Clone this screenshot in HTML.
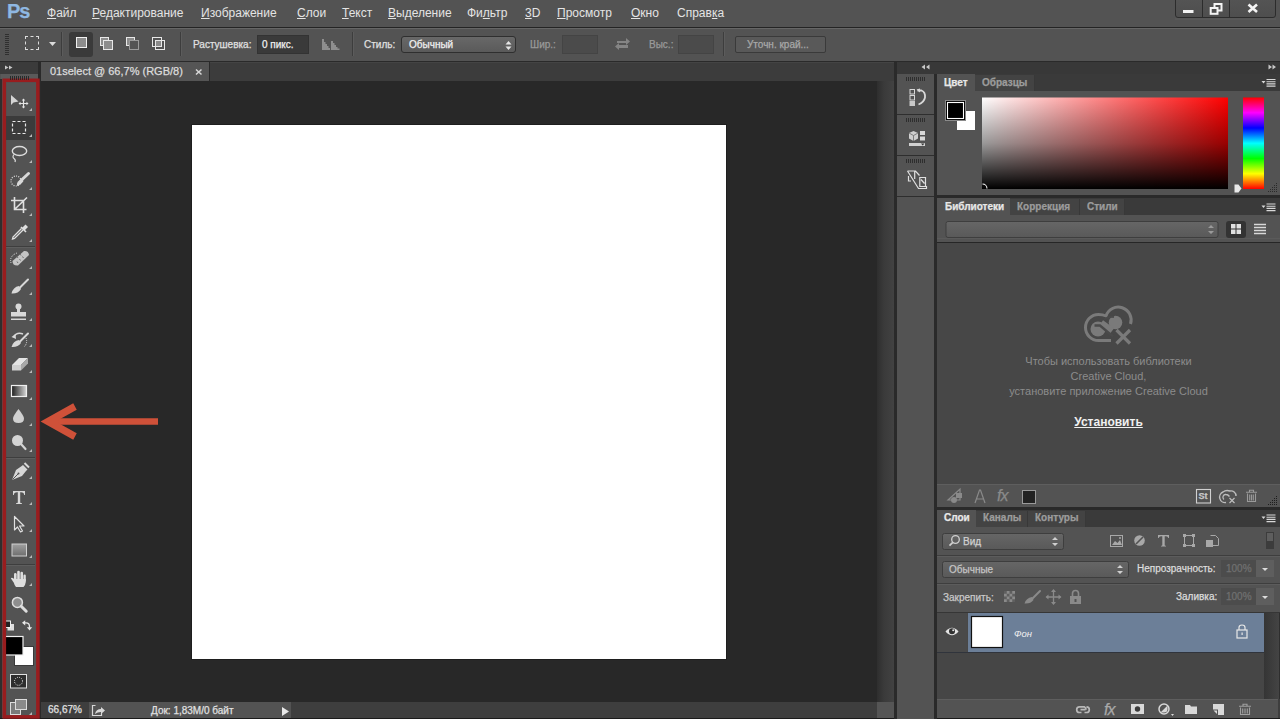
<!DOCTYPE html>
<html><head><meta charset="utf-8">
<style>
#menu .t{-webkit-text-stroke:0}
#lib .t{-webkit-text-stroke:0}
*{margin:0;padding:0;box-sizing:border-box}
html,body{width:1280px;height:719px;overflow:hidden;background:#535353;font-family:"Liberation Sans",sans-serif;}
.a{position:absolute}
.t{position:absolute;white-space:nowrap;line-height:1;-webkit-text-stroke:0.25px currentColor}
</style></head><body>
<!-- menu bar -->
<div class="a" style="left:0;top:0;width:1280px;height:27px;background:#535353"></div>
<div class="a" style="left:0;top:27px;width:1280px;height:1px;background:#242424"></div>
<!-- options bar -->
<div class="a" style="left:0;top:28px;width:1280px;height:34px;background:#535353"></div>
<div class="a" style="left:0;top:28px;width:1280px;height:1px;background:#666666"></div>
<div class="a" style="left:0;top:61px;width:1280px;height:1px;background:#2a2a2a"></div>
<!-- left toolbar -->
<div class="a" style="left:0;top:62px;width:38px;height:12px;background:#3b3b3b"></div>
<div class="a" style="left:0;top:74px;width:38px;height:645px;background:#535353"></div>
<div class="a" style="left:38px;top:61px;width:3px;height:658px;background:#2a2a2a"></div>
<div class="a" style="left:0;top:79px;width:1.5px;height:640px;background:#2e2e2e"></div>
<!-- tab row -->
<div class="a" style="left:41px;top:62px;width:853px;height:19px;background:#3c3c3c"></div>
<div class="a" style="left:41px;top:62px;width:853px;height:1px;background:#444"></div>
<div class="a" style="left:41px;top:62px;width:168px;height:19px;background:#555555"></div>
<div class="a" style="left:209px;top:62px;width:1px;height:19px;background:#2a2a2a"></div>
<!-- canvas area -->
<div class="a" style="left:41px;top:81px;width:836px;height:621px;background:#282828"></div>
<div class="a" style="left:877px;top:81px;width:17px;height:621px;background:linear-gradient(to right,#2e2e2e,#3a3a3a 40%,#424242)"></div>
<div class="a" style="left:191px;top:124px;width:536px;height:536px;background:#1e1e1e"></div>
<div class="a" style="left:192px;top:125px;width:534px;height:534px;background:#ffffff"></div>
<!-- status bar -->
<div class="a" style="left:41px;top:702px;width:853px;height:16px;background:#3e3e3e"></div>
<div class="a" style="left:877px;top:702px;width:17px;height:16px;background:#555555"></div>
<div class="a" style="left:89px;top:702px;width:202px;height:16px;background:#535353"></div>
<div class="a" style="left:0;top:718px;width:1280px;height:1px;background:#1a1a1a"></div>
<!-- right dock -->
<div class="a" style="left:894px;top:61px;width:3px;height:658px;background:#2a2a2a"></div>
<div class="a" style="left:897px;top:62px;width:383px;height:12px;background:#383838"></div>
<div class="a" style="left:897px;top:74px;width:37px;height:645px;background:#535353"></div>
<div class="a" style="left:934px;top:74px;width:3px;height:645px;background:#2a2a2a"></div>
<!-- color panel -->
<div class="a" style="left:937px;top:74px;width:343px;height:17px;background:#3a3a3a"></div>
<div class="a" style="left:937px;top:91px;width:343px;height:104px;background:#535353"></div>
<div class="a" style="left:937px;top:195px;width:343px;height:3px;background:#2a2a2a"></div>
<!-- library panel -->
<div class="a" style="left:937px;top:198px;width:343px;height:17px;background:#3a3a3a"></div>
<div class="a" style="left:937px;top:215px;width:343px;height:27px;background:#535353"></div>
<div class="a" style="left:937px;top:242px;width:343px;height:1px;background:#262626"></div>
<div class="a" style="left:937px;top:238px;width:343px;height:1px;background:#5a5a5a"></div>
<div class="a" style="left:937px;top:243px;width:343px;height:241px;background:#474747"></div>
<div class="a" style="left:937px;top:484px;width:343px;height:23px;background:#535353"></div>
<div class="a" style="left:937px;top:507px;width:343px;height:3px;background:#2a2a2a"></div>
<!-- layers panel -->
<div class="a" style="left:937px;top:510px;width:343px;height:17px;background:#3a3a3a"></div>
<div class="a" style="left:937px;top:527px;width:343px;height:86px;background:#535353"></div>
<div class="a" style="left:937px;top:613px;width:343px;height:86px;background:#464646"></div>
<div class="a" style="left:937px;top:699px;width:343px;height:19px;background:#535353"></div>
<div class="a" style="left:967.5px;top:613px;width:296.5px;height:39px;background:#6c7f98"></div>

<!-- MENU CONTENT -->
<div class="t" style="left:7px;top:1px;font-size:20px;font-weight:bold;color:#8fb8e2;letter-spacing:-1px">Ps</div>
<div id="menu" style="position:absolute;left:0;top:0;font-size:12px;color:#e4e4e4;--ts:0">
<span class="t" style="left:47px;top:7px"><u>Ф</u>айл</span>
<span class="t" style="left:92px;top:7px"><u>Р</u>едактирование</span>
<span class="t" style="left:201px;top:7px"><u>И</u>зображение</span>
<span class="t" style="left:297px;top:7px"><u>С</u>лои</span>
<span class="t" style="left:342px;top:7px"><u>Т</u>екст</span>
<span class="t" style="left:388px;top:7px"><u>В</u>ыделение</span>
<span class="t" style="left:467px;top:7px">Фи<u>л</u>ьтр</span>
<span class="t" style="left:525px;top:7px"><u>3</u>D</span>
<span class="t" style="left:557px;top:7px"><u>П</u>росмотр</span>
<span class="t" style="left:631px;top:7px"><u>О</u>кно</span>
<span class="t" style="left:677px;top:7px">Справ<u>к</u>а</span>
</div>

<!-- OPTIONS CONTENT -->
<div id="opt" style="position:absolute;left:0;top:0;font-size:10px">
<!-- grip -->
<div class="a" style="left:5px;top:34px;width:4px;height:21px;background:repeating-linear-gradient(#2f2f2f 0 1px,transparent 1px 2px)"></div>
<!-- marquee icon -->
<div class="a" style="left:25px;top:36px;width:14px;height:14px;border:1px dashed #dcdcdc"></div>
<svg class="a" style="left:49px;top:42px" width="8" height="5"><path d="M0 0H7L3.5 4Z" fill="#dcdcdc"/></svg>
<div class="a" style="left:61px;top:32px;width:1px;height:24px;background:#3d3d3d"></div>
<div class="a" style="left:62px;top:32px;width:1px;height:24px;background:#5c5c5c"></div>
<!-- selection mode buttons -->
<div class="a" style="left:69px;top:32px;width:24px;height:25px;background:#3a3a3a;border-radius:3px"></div>
<div class="a" style="left:76px;top:37px;width:11px;height:11px;border:1px solid #f0f0f0;background:#8c8c8c"></div>
<div class="a" style="left:100px;top:37px;width:9px;height:9px;border:1px solid #e8e8e8;background:#8c8c8c"></div>
<div class="a" style="left:103px;top:40px;width:10px;height:10px;border:1px solid #e8e8e8;background:#8c8c8c"></div>
<div class="a" style="left:126px;top:37px;width:9px;height:9px;border:1px solid #e8e8e8;background:#8c8c8c"></div>
<div class="a" style="left:129px;top:40px;width:10px;height:10px;border:1px solid #9a9a9a;background:#535353"></div>
<div class="a" style="left:152px;top:37px;width:10px;height:10px;border:1px solid #e8e8e8;background:transparent"></div>
<div class="a" style="left:155px;top:40px;width:10px;height:10px;border:1px solid #e8e8e8;background:transparent"></div>
<div class="a" style="left:156px;top:41px;width:5px;height:5px;background:#8c8c8c"></div>
<div class="a" style="left:180px;top:32px;width:1px;height:24px;background:#3d3d3d"></div>
<div class="a" style="left:181px;top:32px;width:1px;height:24px;background:#5c5c5c"></div>
<span class="t" id="rast" style="left:193px;top:40px;color:#e0e0e0">Растушевка:</span>
<div class="a" style="left:257px;top:35px;width:52px;height:19px;background:#3a3a3a;border:1px solid #333"></div>
<span class="t" style="left:262px;top:40px;color:#f0f0f0">0 пикс.</span>
<svg class="a" style="left:321px;top:38px" width="20" height="13"><path d="M1 1H3V4H4.5V6H6V8H7.5V10H9V12H1Z" fill="#8e8e8e"/><path d="M10 3H12V5H13.5V7H15V9H16.5V10.5H18.5V12H10Z" fill="#8e8e8e"/></svg>
<div class="a" style="left:352px;top:32px;width:1px;height:24px;background:#3d3d3d"></div>
<div class="a" style="left:353px;top:32px;width:1px;height:24px;background:#5c5c5c"></div>
<span class="t" style="left:364px;top:40px;color:#e0e0e0">Стиль:</span>
<div class="a" style="left:401px;top:36px;width:115px;height:17px;border-radius:3px;background:linear-gradient(#686868,#5a5a5a);border:1px solid #2f2f2f"></div>
<span class="t" style="left:409px;top:40px;color:#f0f0f0">Обычный</span>
<svg class="a" style="left:505px;top:40px" width="8" height="11"><path d="M0.5 4.5L3.5 1L6.5 4.5ZM0.5 6.5L3.5 10L6.5 6.5Z" fill="#e6e6e6"/></svg>
<span class="t" style="left:530px;top:40px;color:#9a9a9a">Шир.:</span>
<div class="a" style="left:562px;top:35px;width:36px;height:19px;background:#4b4b4b;border:1px solid #444"></div>
<svg class="a" style="left:614px;top:36px" width="17" height="15"><path d="M3 5H12V2L16 5.5L12 9V7H3Z" fill="#858585"/><path d="M14 9H5V7L1 10.5L5 14V12H14Z" fill="#858585"/></svg>
<span class="t" style="left:649px;top:40px;color:#9a9a9a">Выс.:</span>
<div class="a" style="left:678px;top:35px;width:36px;height:19px;background:#4b4b4b;border:1px solid #444"></div>
<div class="a" style="left:723px;top:32px;width:1px;height:24px;background:#3d3d3d"></div>
<div class="a" style="left:724px;top:32px;width:1px;height:24px;background:#5c5c5c"></div>
<div class="a" style="left:735px;top:36px;width:91px;height:17px;border-radius:2px;background:#595959;border:1px solid #3a3a3a"></div>
<span class="t" style="left:747px;top:40px;color:#a8a8a8">Уточн. край...</span>
</div>

<!-- TOOLBAR -->
<svg class="a" style="left:0;top:0" width="41" height="719" viewBox="0 0 41 719">
<defs>
<linearGradient id="gGrad" x1="0" x2="1" y1="0" y2="0"><stop offset="0" stop-color="#1a1a1a"/><stop offset="1" stop-color="#d8d8d8"/></linearGradient>
<linearGradient id="gRect" x1="0" x2="0" y1="0" y2="1"><stop offset="0" stop-color="#a0a0a0"/><stop offset="1" stop-color="#6e6e6e"/></linearGradient>
</defs>
<!-- header arrows -->
<path d="M5 65.5L8.5 67.5L5 69.5Z M9 65.5L12.5 67.5L9 69.5Z" fill="#c8c8c8"/>
<!-- top grip -->
<rect x="1" y="74" width="37" height="5" fill="#5a5a5a"/>
<path d="M10.5 76V80M12.5 76V80M14.5 76V80M16.5 76V80M18.5 76V80M20.5 76V80M22.5 76V80M24.5 76V80M26.5 76V80M28.5 76V80" stroke="#2a2a2a" stroke-width="1"/>
<!-- selected marquee bg -->
<rect x="6" y="116" width="29" height="24" fill="#3b3b3b"/>
<!-- separators -->
<rect x="6" y="246" width="29" height="1" fill="#3e3e3e"/><rect x="6" y="247" width="29" height="1" fill="#5e5e5e"/>
<rect x="6" y="457" width="29" height="1" fill="#3e3e3e"/><rect x="6" y="458" width="29" height="1" fill="#5e5e5e"/>
<rect x="6" y="564" width="29" height="1" fill="#3e3e3e"/><rect x="6" y="565" width="29" height="1" fill="#5e5e5e"/>
<g fill="#c4c4c4">
<!-- corner triangles -->
<path d="M32 108V111H29Z M32 134V137H29Z M32 160V163H29Z M32 187V190H29Z M32 213V216H29Z M32 239V242H29Z M32 266V269H29Z M32 292V295H29Z M32 318V321H29Z M32 344V347H29Z M32 370V373H29Z M32 397V400H29Z M32 423V426H29Z M32 449V452H29Z M32 476V479H29Z M32 502V505H29Z M32 529V532H29Z M32 555V558H29Z M32 583V586H29Z" fill="#b8b8b8"/>
</g>
<!-- move tool -->
<path d="M11 95V105L13.5 102.5L18.5 101.5Z" fill="#d4d4d4"/>
<path d="M23.5 99V108M19 103.5H28" stroke="#e4e4e4" stroke-width="1.2" fill="none"/>
<path d="M23.5 98.5L21.8 100.5H25.2Z M23.5 108.5L21.8 106.5H25.2Z M18.5 103.5L20.5 101.8V105.2Z M28.5 103.5L26.5 101.8V105.2Z" fill="#e4e4e4"/>
<!-- marquee -->
<rect x="12.5" y="121.5" width="13" height="12" fill="none" stroke="#e8e8e8" stroke-width="1.2" stroke-dasharray="3 2"/>
<!-- lasso -->
<ellipse cx="19.5" cy="151" rx="7.2" ry="4.5" fill="none" stroke="#dcdcdc" stroke-width="1.4"/>
<path d="M14 154.5Q12 157 14 158.5Q16 160 15 162" fill="none" stroke="#dcdcdc" stroke-width="1.2"/>
<!-- quick select -->
<circle cx="16" cy="181" r="5" fill="none" stroke="#e0e0e0" stroke-width="1.2" stroke-dasharray="1 1.3"/>
<path d="M28.5 173.5L21 180.5" stroke="#d8d8d8" stroke-width="3" stroke-linecap="round"/>
<path d="M22 179Q16 181 17 186Q21 185 23.5 181Z" fill="#d8d8d8"/>
<!-- crop -->
<path d="M14.5 197V209.5H26.5 M11 200.5H23.5V213 M15 209L27 197.5" fill="none" stroke="#e0e0e0" stroke-width="1.6"/>
<!-- eyedropper -->
<path d="M25.5 224.5L28 227L24.5 230.5L22 228Z" fill="#e0e0e0"/>
<path d="M21 227L26 232" stroke="#e0e0e0" stroke-width="1.6"/>
<path d="M23 230L14.5 238.5L12.5 239L13 237L21.5 228.5" fill="none" stroke="#e0e0e0" stroke-width="1.3"/>
<!-- healing -->
<path d="M12.5 261L24 251Q28.5 250.5 29 255L18 265.5Q12.5 266 12.5 261Z" fill="#c4c4c4"/>
<path d="M17 256.5L18 258M20 254L21 255.5M19.5 259L20.5 260.5M22.5 256.5L23.5 258M17 261.5L18 263" stroke="#6c6c6c" stroke-width="1"/>
<path d="M11 263Q9 256 17 253" fill="none" stroke="#e0e0e0" stroke-width="1" stroke-dasharray="1 1"/>
<!-- brush -->
<path d="M28 279.5L19.5 288" stroke="#d8d8d8" stroke-width="2" stroke-linecap="round"/>
<path d="M19 286Q13 287 11.5 293.5Q18 294 21 289Z" fill="#d8d8d8"/>
<!-- stamp -->
<circle cx="18.5" cy="306.5" r="3" fill="#d8d8d8"/>
<path d="M17 308H20V312H17Z" fill="#d8d8d8"/>
<path d="M11 312H26V316.5H11Z" fill="#d8d8d8"/>
<path d="M11 318.5H26V320H11Z" fill="#d8d8d8"/>
<!-- history brush -->
<path d="M13.5 337Q17 331.5 23 334" fill="none" stroke="#d8d8d8" stroke-width="1.4"/>
<path d="M11.5 337L15.5 334L16 339Z" fill="#d8d8d8"/>
<path d="M28 333.5L19.5 342" stroke="#d8d8d8" stroke-width="2" stroke-linecap="round"/>
<path d="M19 340Q13 341 11.5 347Q18 347.5 21 343Z" fill="#d8d8d8"/>
<path d="M26 338Q28 343 24 347" fill="none" stroke="#e0e0e0" stroke-width="1" stroke-dasharray="1 1"/>
<!-- eraser -->
<path d="M12 365L19 358H28L21 365Z" fill="#e4e4e4"/>
<path d="M12 365V370.5H21V365Z" fill="#cfcfcf"/>
<path d="M21 365V370.5L28 363.5V358Z" fill="#a8a8a8"/>
<!-- gradient -->
<rect x="11.5" y="385.5" width="15" height="11" fill="url(#gGrad)" stroke="#f0f0f0" stroke-width="1.2"/>
<!-- blur drop -->
<path d="M18.5 409Q13 416 13 418.5Q13 423 18.5 423Q24 423 24 418.5Q24 416 18.5 409Z" fill="#d0d0d0"/>
<!-- dodge -->
<circle cx="17.5" cy="440.5" r="5.5" fill="#d4d4d4"/>
<path d="M21 444L25.5 449" stroke="#d4d4d4" stroke-width="2.2" stroke-linecap="round"/>
<!-- pen -->
<path d="M23 465L27.5 469.5L26 471L22 476L12 480L16 470L21 466.5Z" fill="#d8d8d8"/>
<path d="M24.5 463L29 467.5" stroke="#d8d8d8" stroke-width="2"/>
<path d="M12.5 479.5L18 474" stroke="#555" stroke-width="1"/>
<circle cx="18.5" cy="473.5" r="1" fill="#555"/>
<!-- type -->
<path d="M13 491H25V495H24.2Q24 492.3 21 492.3H20.2V502.5Q20.2 503.3 22 503.3V504H16V503.3Q17.8 503.3 17.8 502.5V492.3H17Q14 492.3 13.8 495H13Z" fill="#d8d8d8"/>
<!-- path select -->
<path d="M14.5 516.5V530L17.5 527L20.5 532L22.5 531L19.5 526H24Z" fill="none" stroke="#e0e0e0" stroke-width="1.2" stroke-linejoin="round"/>
<!-- rectangle -->
<rect x="12" y="544" width="14.5" height="12" fill="url(#gRect)" stroke="#d0d0d0" stroke-width="1"/>
<!-- hand -->
<g fill="#dedede">
<rect x="14" y="573" width="2.6" height="8" rx="1.3"/>
<rect x="17.2" y="570.8" width="2.6" height="10" rx="1.3"/>
<rect x="20.4" y="571.8" width="2.6" height="9" rx="1.3"/>
<rect x="23.4" y="574.5" width="2.4" height="7" rx="1.2"/>
<path d="M14 579H25.8V582Q25.5 585 23.5 587H16Q14 584.5 14 582Z"/>
<path d="M10.8 578.2Q12 577 13.5 578.5L16.5 582.5L15 584.5Z"/>
</g>
<!-- zoom -->
<circle cx="17.4" cy="602.4" r="5" fill="#8e8e8e" stroke="#dedede" stroke-width="1.5"/>
<path d="M21.2 606.2L26.2 611.2" stroke="#dedede" stroke-width="3" stroke-linecap="round"/>
<!-- default colors -->
<rect x="7.5" y="624" width="6.5" height="6.5" fill="#e0e0e0"/>
<rect x="5.5" y="621" width="5" height="6.5" fill="#222" stroke="#f0f0f0" stroke-width="1"/>
<!-- swap -->
<path d="M24 622.8H26Q29.5 622.8 29.5 626.5V628" fill="none" stroke="#e8e8e8" stroke-width="1.3"/>
<path d="M22 622.8L25.2 620.2V625.4Z M29.5 630.5L26.8 627.3H32.2Z" fill="#e8e8e8"/>
<!-- bg / fg -->
<rect x="14.5" y="646.5" width="19" height="19" fill="#ffffff" stroke="#3a3a3a" stroke-width="1"/>
<rect x="4.5" y="636.5" width="18.5" height="18.5" fill="#000000" stroke="#f0f0f0" stroke-width="1.2"/>
<!-- quick mask -->
<rect x="10.5" y="674.5" width="16" height="13.5" fill="#2e2e2e" stroke="#e0e0e0" stroke-width="1"/>
<circle cx="18.5" cy="681.3" r="4" fill="none" stroke="#e8e8e8" stroke-width="1" stroke-dasharray="1 1.1"/>
<!-- screen mode -->
<rect x="10.5" y="702.5" width="10" height="12" fill="#7a7a7a" stroke="#dcdcdc" stroke-width="1"/>
<rect x="15.5" y="699.5" width="11" height="10" fill="#8a8a8a" stroke="#dcdcdc" stroke-width="1"/>
<path d="M32 712V715H29Z" fill="#b8b8b8"/>
<!-- red border -->
<rect x="4.3" y="80.3" width="33.6" height="636.6" fill="none" stroke="#981c1e" stroke-width="3.6"/>
<path d="M10.5 76V80M12.5 76V80M14.5 76V80M16.5 76V80M18.5 76V80M20.5 76V80M22.5 76V80M24.5 76V80M26.5 76V80M28.5 76V80" stroke="#2a2a2a" stroke-width="1"/>
</svg>
<!-- RED ARROW -->
<svg class="a" style="left:38px;top:400px" width="124" height="44" viewBox="38 400 124 44">
<path d="M158 421.5H52" fill="none" stroke="#cf5139" stroke-width="6.6"/>
<path d="M75 406.5L48 421.5L75 436.5" fill="none" stroke="#cf5139" stroke-width="7.2" stroke-linecap="butt" stroke-linejoin="miter" stroke-miterlimit="10"/>
</svg>

<!-- TAB + STATUS -->
<div id="tab" style="position:absolute;left:0;top:0;font-size:11px">
<span class="t" style="left:50px;top:66px;color:#dcdcdc">01select @ 66,7% (RGB/8)</span>
<svg class="a" style="left:193px;top:67px" width="10" height="10"><path d="M3 2.5L8.5 7.5M8.5 2.5L3 7.5" stroke="#d8d8d8" stroke-width="1.5"/></svg>
</div>
<div id="stat" style="position:absolute;left:0;top:0;font-size:10px">
<span class="t" style="left:48px;top:705px;color:#e0e0e0">66,67%</span>
<svg class="a" style="left:91px;top:704px" width="16" height="13"><path d="M4.5 1.5H1.5V11.5H10.5V9" fill="none" stroke="#d8d8d8" stroke-width="1.2"/><path d="M4 10Q5 5 10 5V3L14 6.5L10 10V8Q6.5 8 4 10Z" fill="#d8d8d8"/></svg>
<span class="t" style="left:151px;top:706px;color:#e0e0e0">Док: 1,83M/0 байт</span>
<svg class="a" style="left:281px;top:706px" width="9" height="11"><path d="M1 1V10L8 5.5Z" fill="#e8e8e8"/></svg>
</div>

<!-- RIGHT DOCK ICONS -->
<svg class="a" style="left:894px;top:61px" width="386" height="658" viewBox="894 61 386 658">
<defs>
<linearGradient id="gHueW" x1="0" x2="1" y1="0" y2="0"><stop offset="0" stop-color="#ffffff"/><stop offset="1" stop-color="#ff0000"/></linearGradient>
<linearGradient id="gBlk" x1="0" x2="0" y1="0" y2="1"><stop offset="0" stop-color="#000" stop-opacity="0"/><stop offset="0.5" stop-color="#000" stop-opacity="0.4"/><stop offset="1" stop-color="#000" stop-opacity="1"/></linearGradient>
<linearGradient id="gHue" x1="0" x2="0" y1="0" y2="1">
<stop offset="0" stop-color="#ff0000"/><stop offset="0.1667" stop-color="#ff00ff"/><stop offset="0.3333" stop-color="#0000ff"/><stop offset="0.5" stop-color="#00ffff"/><stop offset="0.6667" stop-color="#00ff00"/><stop offset="0.8333" stop-color="#ffff00"/><stop offset="1" stop-color="#ff0000"/></linearGradient>
<linearGradient id="gDrop" x1="0" x2="0" y1="0" y2="1"><stop offset="0" stop-color="#666"/><stop offset="1" stop-color="#595959"/></linearGradient>
</defs>
<!-- header arrows -->
<path d="M925 64.5L921.5 67L925 69.5Z M929.5 64.5L926 67L929.5 69.5Z" fill="#c8c8c8"/>
<path d="M1268.5 64.5L1272 67L1268.5 69.5Z M1272.5 64.5L1276 67L1272.5 69.5Z" fill="#c8c8c8"/>
<!-- icon column separators -->
<rect x="897" y="114" width="37" height="1" fill="#2e2e2e"/>
<rect x="897" y="155" width="37" height="1" fill="#2e2e2e"/>
<rect x="897" y="196" width="37" height="1" fill="#2e2e2e"/>
<path d="M906.5 77V81M908.5 77V81M910.5 77V81M912.5 77V81M914.5 77V81M916.5 77V81M918.5 77V81M920.5 77V81M922.5 77V81M924.5 77V81" stroke="#2e2e2e"/>
<path d="M906.5 118V122M908.5 118V122M910.5 118V122M912.5 118V122M914.5 118V122M916.5 118V122M918.5 118V122M920.5 118V122M922.5 118V122M924.5 118V122" stroke="#2e2e2e"/>
<path d="M906.5 159V163M908.5 159V163M910.5 159V163M912.5 159V163M914.5 159V163M916.5 159V163M918.5 159V163M920.5 159V163M922.5 159V163M924.5 159V163" stroke="#2e2e2e"/>
<!-- history icon -->
<rect x="910" y="89.5" width="4.5" height="4.5" fill="none" stroke="#d8d8d8" stroke-width="1"/>
<rect x="910" y="95.5" width="4.5" height="4.5" fill="none" stroke="#d8d8d8" stroke-width="1"/>
<rect x="909.5" y="101" width="5.5" height="5" fill="#c8c8c8"/>
<path d="M917.5 90.5H921.5Q925.5 92 925 97.5Q924 102.5 918.5 104.5" fill="none" stroke="#d8d8d8" stroke-width="1.8"/>
<path d="M916.5 89.5L920 88.5V92.5Z" fill="#d8d8d8"/>
<!-- 3D icon -->
<path d="M913.5 131L918 133V138.5L913.5 141L909 138.5V133Z" fill="#cfcfcf"/>
<path d="M909 133L913.5 135.5L918 133M913.5 135.5V141" stroke="#6a6a6a" stroke-width="0.8" fill="none"/>
<rect x="920" y="131" width="5" height="4" fill="#d8d8d8"/><rect x="920" y="136.5" width="5" height="4" fill="#d8d8d8"/>
<rect x="909" y="143" width="16" height="3" fill="#d0d0d0"/>
<path d="M921 143.5H924.5L922.7 145.5Z" fill="#333"/>
<!-- measure/clone icon -->
<path d="M907.5 171H915.5L919.5 175.5 M907.5 171L918.5 188.5H926.5V186 M908.5 176V181H911 M914.7 171V179 M919.8 177.5H925.5V186.5H919.8Z M921 179.5L924.5 183.5" fill="none" stroke="#e0e0e0" stroke-width="1.2"/>

<!-- COLOR PANEL -->
<rect x="937" y="74" width="38" height="17" fill="#535353"/>
<rect x="975" y="75" width="59" height="16" fill="#434343"/>
<rect x="1034" y="75" width="1" height="16" fill="#383838"/>
<path d="M1261.5 81H1265.5L1263.5 83.5Z" fill="#d8d8d8"/>
<path d="M1266.5 79.5H1275.5M1266.5 81.7H1275.5M1266.5 83.9H1275.5M1266.5 86.1H1275.5" stroke="#d8d8d8" stroke-width="1.1"/>
<!-- fg/bg -->
<rect x="957" y="111" width="18" height="19" fill="#ffffff"/>
<rect x="945.5" y="100.5" width="20" height="20" fill="#000" stroke="#8a8a8a" stroke-width="1"/>
<rect x="947.5" y="102.5" width="16" height="16" fill="#000" stroke="#ffffff" stroke-width="1.1"/>
<!-- field -->
<rect x="982" y="97.5" width="246" height="91.5" fill="url(#gHueW)"/>
<rect x="982" y="97.5" width="246" height="91.5" fill="url(#gBlk)"/>
<path d="M982.5 184A4.5 4.5 0 0 1 987 188.5" fill="none" stroke="#ffffff" stroke-width="1.1"/>
<rect x="1243" y="97.5" width="21" height="91.5" fill="url(#gHue)"/>
<path d="M1234.5 184.5H1238.5L1241.5 188.5L1238.5 192.5H1234.5Z" fill="#e8e8e8"/>
<path d="M1276 183.5h1M1274 185.5h1M1276 185.5h1M1272 187.5h1M1274 187.5h1M1276 187.5h1M1270 189.5h1M1272 189.5h1M1274 189.5h1M1276 189.5h1M1268 191.5h1M1270 191.5h1M1272 191.5h1M1274 191.5h1M1276 191.5h1" stroke="#2a2a2a" stroke-width="1.2"/>

<!-- LIBRARY PANEL -->
<rect x="937" y="198" width="73" height="17" fill="#535353"/>
<rect x="1010" y="199" width="69" height="16" fill="#434343"/>
<rect x="1079" y="199" width="1" height="16" fill="#383838"/>
<rect x="1080" y="199" width="44" height="16" fill="#434343"/>
<rect x="1124" y="199" width="1" height="16" fill="#383838"/>
<path d="M1261.5 205.5H1265.5L1263.5 208Z" fill="#d8d8d8"/>
<path d="M1266.5 204H1275.5M1266.5 206.2H1275.5M1266.5 208.4H1275.5M1266.5 210.6H1275.5" stroke="#d8d8d8" stroke-width="1.1"/>
<rect x="946" y="221.5" width="272" height="16" rx="2" fill="url(#gDrop)" stroke="#3e3e3e" stroke-width="1"/>
<path d="M1208 228L1211 225L1214 228Z M1208 231L1211 234L1214 231Z" fill="#9a9a9a"/>
<rect x="1226" y="221" width="20" height="17" rx="3" fill="#333333"/>
<rect x="1231" y="224" width="4.5" height="4.5" fill="#e0e0e0"/><rect x="1236.5" y="224" width="4.5" height="4.5" fill="#e0e0e0"/>
<rect x="1231" y="229.5" width="4.5" height="4.5" fill="#e0e0e0"/><rect x="1236.5" y="229.5" width="4.5" height="4.5" fill="#e0e0e0"/>
<path d="M1254 224.5H1266M1254 227.5H1266M1254 230.5H1266M1254 233.5H1266" stroke="#d8d8d8" stroke-width="1.5"/>
<!-- CC icon -->
<g fill="none" stroke="#7a7a7a" stroke-width="3">
<path d="M1111 340.5H1098.5A13 13 0 0 1 1098.5 314.5Q1103 314.5 1106 316A11 11 0 0 1 1130.5 324"/>
</g>
<circle cx="1098" cy="329" r="7.5" fill="#7a7a7a"/>
<circle cx="1115.5" cy="322.5" r="6.8" fill="#7a7a7a"/>
<path d="M1101 323L1112 331" stroke="#7a7a7a" stroke-width="7"/>
<path d="M1094.5 325.5L1100 325.5L1113 336.5" fill="none" stroke="#4a4a4a" stroke-width="2.4"/>
<path d="M1104 319.5Q1109 316 1114 317" fill="none" stroke="#4a4a4a" stroke-width="2"/>
<path d="M1116.5 330L1130 343.5M1130 330L1116.5 343.5" stroke="#7a7a7a" stroke-width="3.2"/>
<!-- library bottom icons -->
<rect x="937" y="484" width="343" height="1" fill="#5e5e5e"/>
<path d="M948 500L960 489V500Z" fill="none" stroke="#8a8a8a" stroke-width="1.2"/>
<circle cx="954" cy="500" r="3" fill="#8a8a8a"/>
<rect x="956" y="493" width="6" height="5" fill="#8a8a8a"/>
<path d="M975 503L979.5 490H980.5L985 503M976.5 499H983.5" fill="none" stroke="#8a8a8a" stroke-width="1.2"/>
<rect x="1022.5" y="490.5" width="13" height="13" fill="#222" stroke="#9a9a9a" stroke-width="1"/>
<rect x="1196.5" y="489.5" width="14" height="13.5" fill="none" stroke="#d0d0d0" stroke-width="1.1"/>
<path d="M1226 502.5A5.5 5.5 0 0 1 1223 492Q1226 489.5 1230 491A5 5 0 0 1 1236 496" fill="none" stroke="#bdbdbd" stroke-width="1.4"/>
<path d="M1224 499.5A2.8 2.8 0 0 1 1226 494.5Q1228 494.5 1229.5 496.5" fill="none" stroke="#bdbdbd" stroke-width="1.3"/>
<path d="M1229.5 498L1234.5 503M1234.5 498L1229.5 503" stroke="#bdbdbd" stroke-width="1.2"/>
<path d="M1246 492.2H1257M1249.5 492V490.3H1253.5V492M1247.5 493.5V501.5H1255.5V493.5M1249.7 494.5V500.5M1251.5 494.5V500.5M1253.3 494.5V500.5" fill="none" stroke="#9a9a9a" stroke-width="1.1"/>
<path d="M1276 496.5h1M1274 498.5h1M1276 498.5h1M1272 500.5h1M1274 500.5h1M1276 500.5h1M1270 502.5h1M1272 502.5h1M1274 502.5h1M1276 502.5h1M1268 504.5h1M1270 504.5h1M1272 504.5h1M1274 504.5h1M1276 504.5h1" stroke="#1e1e1e" stroke-width="1.2"/>

<!-- LAYERS PANEL -->
<rect x="937" y="510" width="39" height="17" fill="#535353"/>
<rect x="976" y="511" width="51" height="16" fill="#434343"/>
<rect x="1027" y="511" width="1" height="16" fill="#383838"/>
<rect x="1028" y="511" width="57" height="16" fill="#434343"/>
<rect x="1085" y="511" width="1" height="16" fill="#383838"/>
<path d="M1261.5 516.5H1265.5L1263.5 519Z" fill="#d8d8d8"/>
<path d="M1266.5 515H1275.5M1266.5 517.2H1275.5M1266.5 519.4H1275.5M1266.5 521.6H1275.5" stroke="#d8d8d8" stroke-width="1.1"/>
<!-- filter row -->
<rect x="942.5" y="533.5" width="121" height="16" rx="2" fill="url(#gDrop)" stroke="#3e3e3e" stroke-width="1"/>
<circle cx="955.5" cy="539.5" r="3.8" fill="none" stroke="#cfcfcf" stroke-width="1.3"/>
<path d="M952.8 542.3L949.5 545.6" stroke="#cfcfcf" stroke-width="1.8"/>
<path d="M1052 540L1055 537L1058 540Z M1052 543L1055 546L1058 543Z" fill="#cfcfcf"/>
<rect x="1110.5" y="535.5" width="12" height="11" fill="none" stroke="#a8a8a8" stroke-width="1"/>
<path d="M1112 545L1115 541L1117.5 543L1120 540L1122 545Z" fill="#a8a8a8"/>
<circle cx="1120" cy="538" r="1" fill="#a8a8a8"/>
<circle cx="1139.5" cy="540.5" r="5.3" fill="#a8a8a8"/>
<path d="M1136 544L1143 537" stroke="#535353" stroke-width="1.6"/>
<path d="M1158 535H1169V538H1168.3Q1168 536.3 1166 536.3H1164.7V545.2Q1164.7 545.8 1166 545.8V546.5H1161V545.8Q1162.3 545.8 1162.3 545.2V536.3H1161Q1159 536.3 1158.7 538H1158Z" fill="#a8a8a8"/>
<path d="M1184.5 535.5H1193.5V545.5H1184.5Z" fill="none" stroke="#a8a8a8" stroke-width="1"/>
<rect x="1183" y="534" width="3" height="3" fill="#a8a8a8"/><rect x="1192" y="534" width="3" height="3" fill="#a8a8a8"/><rect x="1183" y="544" width="3" height="3" fill="#a8a8a8"/><rect x="1192" y="544" width="3" height="3" fill="#a8a8a8"/>
<path d="M1210.5 535.5H1215.5L1218.5 538.5V545.5H1213" fill="none" stroke="#a8a8a8" stroke-width="1"/>
<rect x="1206" y="540" width="7" height="7" fill="#a8a8a8"/>
<rect x="1266" y="532" width="8" height="17" fill="#3c3c3c"/>
<rect x="1267" y="533" width="6" height="8" fill="#5e5e5e"/>
<rect x="937" y="555" width="343" height="1" fill="#3e3e3e"/>
<rect x="937" y="556" width="343" height="1" fill="#5c5c5c"/>
<!-- blend row -->
<rect x="942.5" y="561.5" width="186" height="16" rx="2" fill="url(#gDrop)" stroke="#3e3e3e" stroke-width="1"/>
<path d="M1117 568L1120 565L1123 568Z M1117 571L1120 574L1123 571Z" fill="#cfcfcf"/>
<rect x="1221" y="560" width="35" height="17" fill="#4c4c4c"/>
<rect x="1256" y="560" width="18" height="17" fill="#5e5e5e"/>
<path d="M1262 568H1268L1265 571Z" fill="#dcdcdc"/>
<rect x="937" y="583" width="343" height="1" fill="#3e3e3e"/>
<rect x="937" y="584" width="343" height="1" fill="#5c5c5c"/>
<!-- lock row -->
<rect x="1004" y="591" width="11" height="11" fill="#8a8a8a"/>
<path d="M1004 591h2.75v2.75h-2.75z M1009.5 591h2.75v2.75h-2.75z M1006.75 593.75h2.75v2.75h-2.75z M1012.25 593.75h2.75v2.75h-2.75z M1004 596.5h2.75v2.75h-2.75z M1009.5 596.5h2.75v2.75h-2.75z M1006.75 599.25h2.75v2.75h-2.75z M1012.25 599.25h2.75v2.75h-2.75z" fill="#5f5f5f"/>
<path d="M1040 591L1032 599" stroke="#8a8a8a" stroke-width="2" stroke-linecap="round"/>
<path d="M1032 597Q1026 598 1024.5 603.5Q1030.5 604 1033.5 600Z" fill="#8a8a8a"/>
<path d="M1053.5 590V604M1046.5 597H1060.5" stroke="#8a8a8a" stroke-width="1.3"/>
<path d="M1053.5 589L1051 592H1056Z M1053.5 605L1051 602H1056Z M1045.5 597L1048.5 594.5V599.5Z M1061.5 597L1058.5 594.5V599.5Z" fill="#8a8a8a"/>
<rect x="1070" y="596" width="11" height="8" fill="#8a8a8a"/>
<path d="M1072.5 596V593.5Q1072.5 590.5 1075.5 590.5Q1078.5 590.5 1078.5 593.5V596" fill="none" stroke="#8a8a8a" stroke-width="1.6"/>
<rect x="1074.5" y="599" width="2" height="3" fill="#535353"/>
<rect x="1221" y="588" width="35" height="17" fill="#4c4c4c"/>
<rect x="1256" y="588" width="18" height="17" fill="#5e5e5e"/>
<path d="M1262 596H1268L1265 599Z" fill="#dcdcdc"/>
<rect x="937" y="612" width="343" height="1" fill="#363636"/>
<!-- layer list -->
<rect x="937" y="613" width="30.5" height="39" fill="#4a4a4a"/>
<rect x="937" y="652" width="327" height="1" fill="#30343c"/>
<defs><linearGradient id="gScr" x1="0" x2="1" y1="0" y2="0"><stop offset="0" stop-color="#353535"/><stop offset="1" stop-color="#444"/></linearGradient></defs>
<rect x="1264" y="613" width="15" height="86" fill="url(#gScr)"/>
<rect x="1279" y="613" width="1" height="86" fill="#2e2e2e"/>
<path d="M945.5 631.5Q952 624 958.5 631.5Q952 639 945.5 631.5Z" fill="#e4e4e4"/>
<circle cx="952" cy="631.3" r="3" fill="#303030"/>
<circle cx="953.2" cy="630.2" r="1" fill="#e4e4e4"/>
<rect x="971.5" y="616.5" width="31" height="31" fill="#ffffff" stroke="#111" stroke-width="1.2"/>
<rect x="1237" y="630" width="10" height="8" fill="none" stroke="#e8e8e8" stroke-width="1.2"/>
<path d="M1239 630V627.5Q1239 625 1242 625Q1245 625 1245 627.5V630" fill="none" stroke="#e8e8e8" stroke-width="1.2"/>
<rect x="1241.5" y="632.5" width="1.2" height="2.5" fill="#e8e8e8"/>
<!-- layers bottom bar -->
<rect x="937" y="699" width="343" height="1" fill="#5e5e5e"/>
<rect x="1278" y="699" width="2" height="19" fill="#3e3e3e"/>
<path d="M1081.5 712.5H1079.5A2.8 2.8 0 0 1 1079.5 706.9H1084.5A2.8 2.8 0 0 1 1086 709.7M1084.5 712.5H1086.5A2.8 2.8 0 0 0 1086.5 706.9M1080.5 709.7H1085.5" fill="none" stroke="#b8b8b8" stroke-width="1.7"/>
<rect x="1131" y="704" width="13" height="10" fill="#d8d8d8"/>
<circle cx="1137.5" cy="709" r="2.7" fill="#3a3a3a"/>
<circle cx="1164" cy="709" r="5" fill="none" stroke="#d8d8d8" stroke-width="1.5"/>
<path d="M1160.5 712.5L1167.5 705.5V709A3.5 3.5 0 0 1 1164 712.5Z" fill="#d8d8d8"/>
<path d="M1171 714H1174L1172.5 716Z" fill="#d8d8d8"/>
<path d="M1185 705H1190L1191 706.5H1197V714H1185Z" fill="#d8d8d8"/>
<path d="M1213 704H1224V715H1218V709.5H1213Z" fill="#d8d8d8"/>
<path d="M1213.5 710.5H1217V714Z" fill="#d8d8d8"/>
<path d="M1239 706.2H1251M1243 706V704.3H1247V706M1240.5 707.5V714.5H1249.5V707.5M1242.7 708.5V713.5M1245 708.5V713.5M1247.3 708.5V713.5" fill="none" stroke="#a0a0a0" stroke-width="1.1"/>
</svg>

<!-- PANEL TEXTS -->
<div id="ptx" style="position:absolute;left:0;top:0;font-size:10px">
<span class="t" style="left:944px;top:78px;font-weight:bold;color:#e8e8e8">Цвет</span>
<span class="t" style="left:982px;top:78px;font-weight:bold;color:#9c9c9c">Образцы</span>
<span class="t" style="left:945px;top:202px;font-weight:bold;color:#e8e8e8">Библиотеки</span>
<span class="t" style="left:1017px;top:202px;font-weight:bold;color:#9c9c9c">Коррекция</span>
<span class="t" style="left:1087px;top:202px;font-weight:bold;color:#9c9c9c">Стили</span>
<span class="t" style="left:944px;top:513px;font-weight:bold;color:#e8e8e8">Слои</span>
<span class="t" style="left:983px;top:513px;font-weight:bold;color:#9c9c9c">Каналы</span>
<span class="t" style="left:1035px;top:513px;font-weight:bold;color:#9c9c9c">Контуры</span>
</div>
<div id="lib" style="position:absolute;left:937px;top:0;width:343px;font-size:11px;color:#8c8c8c;text-align:center">
<div class="t" style="left:0;width:343px;top:356px">Чтобы использовать библиотеки</div>
<div class="t" style="left:0;width:343px;top:371px">Creative Cloud,</div>
<div class="t" style="left:0;width:343px;top:386px">установите приложение Creative Cloud</div>
<div class="t" style="left:0;width:343px;top:416px;font-size:12px;font-weight:bold;color:#f0f0f0;text-decoration:underline">Установить</div>
</div>
<div id="lay" style="position:absolute;left:0;top:0;font-size:10px">
<span class="t" style="left:963px;top:537px;color:#d0d0d0">Вид</span>
<span class="t" style="left:949px;top:565px;color:#c4c4c4">Обычные</span>
<span class="t" style="left:1137px;top:564px;color:#dcdcdc">Непрозрачность:</span>
<span class="t" style="left:1226px;top:564px;color:#707070">100%</span>
<span class="t" style="left:943px;top:593px;color:#c8c8c8">Закрепить:</span>
<span class="t" style="left:1176px;top:592px;color:#dcdcdc">Заливка:</span>
<span class="t" style="left:1226px;top:592px;color:#707070">100%</span>
<span class="t" style="left:1014px;top:629px;color:#f0f0f0;font-style:italic;font-size:9.5px;-webkit-text-stroke:0">Фон</span>
</div>

<div id="fx" style="position:absolute;left:0;top:0">
<span class="t" style="left:997px;top:488px;font-size:16px;font-style:italic;color:#8a8a8a;letter-spacing:-1px">fx</span>
<span class="t" style="left:1104px;top:702px;font-size:16px;font-style:italic;color:#a8a8a8;letter-spacing:-1px">fx</span>
<span class="t" style="left:1198.5px;top:492px;font-size:9px;font-weight:bold;color:#c8c8c8">St</span>
</div>

<!-- WINDOW CONTROLS -->
<svg class="a" style="left:1170px;top:0" width="110" height="22" viewBox="1170 0 110 22">
<defs><linearGradient id="gWin" x1="0" x2="0" y1="0" y2="1"><stop offset="0" stop-color="#545454"/><stop offset="1" stop-color="#4e4e4e"/></linearGradient></defs>
<path d="M1175.5 -1V15Q1175.5 17.5 1178 17.5H1273Q1275.5 17.5 1275.5 15V-1" fill="url(#gWin)" stroke="#2c2c2c" stroke-width="1"/>
<path d="M1175 19H1276" stroke="#5e5e5e" stroke-width="1"/>
<path d="M1202.5 0V17M1229.5 0V17" stroke="#2c2c2c" stroke-width="1"/>
<rect x="1183" y="10" width="10.5" height="3" fill="#f4f4f4"/>
<rect x="1214.5" y="4" width="7" height="6.5" fill="none" stroke="#f4f4f4" stroke-width="2"/>
<rect x="1210.7" y="8" width="6.8" height="5.8" fill="#4e4e4e" stroke="#f4f4f4" stroke-width="2"/>
<path d="M1248.5 4.5L1257 12M1257 4.5L1248.5 12" stroke="#f4f4f4" stroke-width="2.6"/>
</svg>
</body></html>
